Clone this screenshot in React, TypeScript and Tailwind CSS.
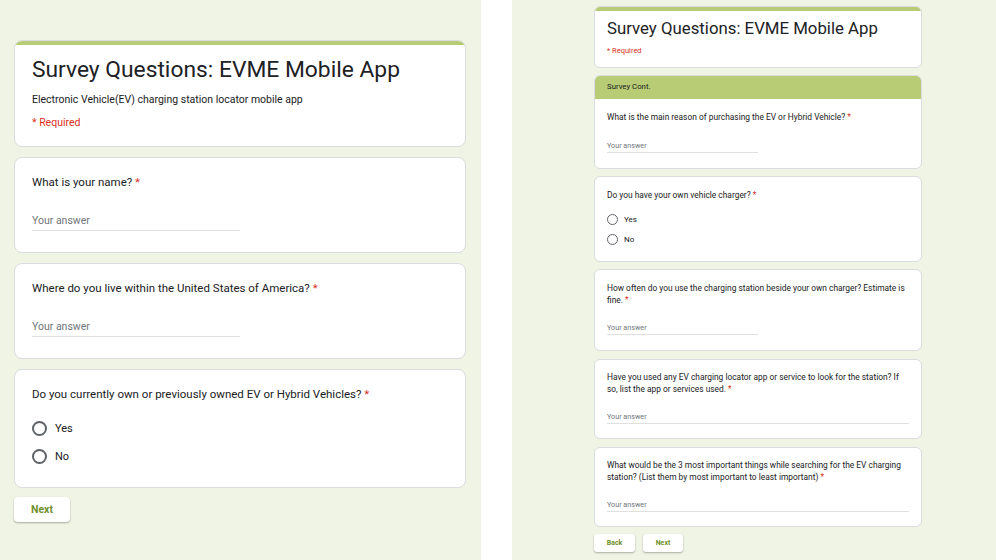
import React from "react";

const BG = "bg-[#f0f4e4]";

function Star() {
  return <span className="text-[#d93025]"> *</span>;
}

function LRadio({ label, className = "" }: { label: string; className?: string }) {
  return (
    <div className={"flex items-center " + className}>
      <span className="w-[15px] h-[15px] rounded-full border-2 border-[#5f6368] box-border" />
      <span className="ml-[8px] text-[11px] leading-[14px] text-[#202124]">{label}</span>
    </div>
  );
}

function RRadio({ label, className = "" }: { label: string; className?: string }) {
  return (
    <div className={"flex items-center " + className}>
      <span className="w-[11px] h-[11px] rounded-full border-[1.5px] border-[#5f6368] box-border" />
      <span className="ml-[6px] text-[8px] leading-[10px] text-[#202124]">{label}</span>
    </div>
  );
}

function LText({ q }: { q: string }) {
  return (
    <div className="h-[96px] bg-white rounded-lg border border-[#dadce0] px-[17px] pt-[17px] box-border">
      <div className="text-[11.5px] leading-[14px] text-[#202124]">
        {q}
        <Star />
      </div>
      <div className="mt-[24px] w-[208px] h-[18px] border-b border-[#e0e0e0] text-[10.5px] leading-[16px] text-[#70757a]">
        Your answer
      </div>
    </div>
  );
}

function RText({
  lines,
  h,
  pt,
  gap,
  full,
}: {
  lines: string[];
  h: string;
  pt: string;
  gap: string;
  full?: boolean;
}) {
  return (
    <div className={"bg-white rounded-md border border-[#dadce0] px-[12px] box-border " + h + " " + pt}>
      <div className="text-[8.4px] leading-[12px] text-[#202124]">
        {lines.map((l, i) => (
          <div key={i} className="whitespace-nowrap">
            {l}
            {i === lines.length - 1 && <Star />}
          </div>
        ))}
      </div>
      <div
        className={
          gap +
          " h-[12px] border-b border-[#e0e0e0] text-[7.2px] leading-[10px] text-[#70757a] " +
          (full ? "w-full" : "w-[151px]")
        }
      >
        Your answer
      </div>
    </div>
  );
}

export default function App() {
  return (
    <div
      className="w-[996px] h-[560px] flex overflow-hidden bg-white"
      style={{ fontFamily: "Roboto, 'Noto Sans', sans-serif" }}
    >
      {/* Left page */}
      <div className={"w-[481px] h-full pl-[14px] pr-[15px] pt-[40px] box-border " + BG}>
        <div className="flex flex-col gap-[10px]">
          <div className="h-[107px] bg-white rounded-lg border border-[#dadce0] overflow-hidden box-border">
            <div className="h-[5px] bg-[#b7cc74] -mt-px -mx-px" />
            <div className="px-[17px]">
              <div className="mt-[10px] text-[22.8px] leading-[30px] text-[#202124]">
                Survey Questions: EVME Mobile App
              </div>
              <div className="mt-[8px] text-[10.5px] leading-[14px] text-[#202124]">
                Electronic Vehicle(EV) charging station locator mobile app
              </div>
              <div className="mt-[9px] text-[10.5px] leading-[14px] text-[#d93025]">* Required</div>
            </div>
          </div>
          <LText q="What is your name?" />
          <LText q="Where do you live within the United States of America?" />
          <div className="h-[119px] bg-white rounded-lg border border-[#dadce0] px-[17px] pt-[17px] box-border">
            <div className="text-[11.5px] leading-[14px] text-[#202124]">
              Do you currently own or previously owned EV or Hybrid Vehicles?
              <Star />
            </div>
            <LRadio label="Yes" className="mt-[20px]" />
            <LRadio label="No" className="mt-[13px]" />
          </div>
        </div>
        <button className="mt-[9px] w-[56px] h-[25px] bg-white rounded-[4px] shadow-[0_1px_2px_rgba(0,0,0,0.3)] text-[10.5px] font-bold text-[#6f8f2a]">
          Next
        </button>
      </div>

      {/* Gap */}
      <div className="w-[31px] h-full bg-white" />

      {/* Right page */}
      <div className={"flex-1 h-full pl-[82px] pt-[6px] box-border " + BG}>
        <div className="w-[328px] flex flex-col">
          <div className="h-[62px] bg-white rounded-md border border-[#dadce0] overflow-hidden box-border">
            <div className="h-[5px] bg-[#b7cc74] -mt-px -mx-px" />
            <div className="px-[12px]">
              <div className="mt-[6px] text-[16.8px] leading-[22px] text-[#202124]">
                Survey Questions: EVME Mobile App
              </div>
              <div className="mt-[7px] text-[7.5px] leading-[10px] text-[#d93025]">* Required</div>
            </div>
          </div>

          <div className="mt-[7px] h-[94px] bg-white rounded-md border border-[#dadce0] overflow-hidden box-border">
            <div className="h-[24px] -mt-px -mx-px bg-[#b7cc74] px-[13px] flex items-center text-[7.8px] text-[#202124]">
              Survey Cont.
            </div>
            <div className="px-[12px] pt-[12px]">
              <div className="text-[8.4px] leading-[12px] text-[#202124]">
                What is the main reason of purchasing the EV or Hybrid Vehicle?
                <Star />
              </div>
              <div className="mt-[18px] w-[151px] h-[12px] border-b border-[#e0e0e0] text-[7.2px] leading-[10px] text-[#70757a]">
                Your answer
              </div>
            </div>
          </div>

          <div className="mt-[7px] h-[86px] bg-white rounded-md border border-[#dadce0] px-[12px] pt-[12px] box-border">
            <div className="text-[8.4px] leading-[12px] text-[#202124]">
              Do you have your own vehicle charger?
              <Star />
            </div>
            <RRadio label="Yes" className="mt-[13px]" />
            <RRadio label="No" className="mt-[9px]" />
          </div>

          <div className="mt-[7px]">
            <RText
              lines={[
                "How often do you use the charging station beside your own charger? Estimate is",
                "fine.",
              ]}
              h="h-[82px]"
              pt="pt-[12px]"
              gap="mt-[17px]"
            />
          </div>
          <div className="mt-[8px]">
            <RText
              lines={[
                "Have you used any EV charging locator app or service to look for the station? If",
                "so, list the app or services used.",
              ]}
              h="h-[80px]"
              pt="pt-[11px]"
              gap="mt-[17px]"
              full
            />
          </div>
          <div className="mt-[8px]">
            <RText
              lines={[
                "What would be the 3 most important things while searching for the EV charging",
                "station? (List them by most important to least important)",
              ]}
              h="h-[80px]"
              pt="pt-[11px]"
              gap="mt-[17px]"
              full
            />
          </div>

          <div className="mt-[7px] flex gap-[8px]">
            <button className="w-[41px] h-[18px] bg-white rounded-[3px] shadow-[0_1px_2px_rgba(0,0,0,0.3)] text-[7px] font-bold text-[#6f8f2a]">
              Back
            </button>
            <button className="w-[40px] h-[18px] bg-white rounded-[3px] shadow-[0_1px_2px_rgba(0,0,0,0.3)] text-[7px] font-bold text-[#6f8f2a]">
              Next
            </button>
          </div>
        </div>
      </div>
    </div>
  );
}
